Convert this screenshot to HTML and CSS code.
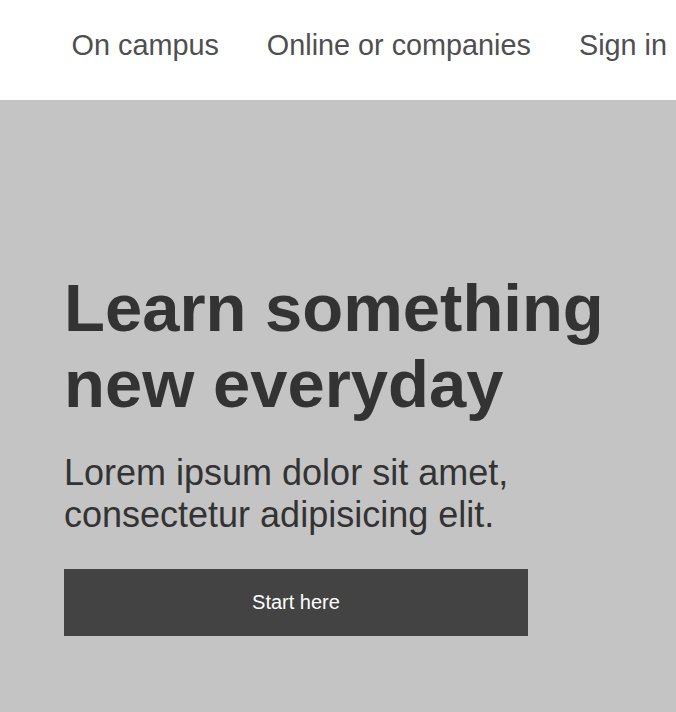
FILE: index.html
```html
<!DOCTYPE html>
<html lang="en">
<head>
<meta charset="utf-8">
<title>Learn something new everyday</title>
<link rel="stylesheet" href="styles.css">
</head>
<body>
<header class="site-header">
  <nav class="nav">
    <a class="nav-link" href="#">On campus</a>
    <a class="nav-link" href="#">Online or companies</a>
    <a class="nav-link" href="#">Sign in</a>
  </nav>
</header>
<main class="hero">
  <div class="hero-content">
    <h1 class="hero-title">Learn something new everyday</h1>
    <p class="hero-text">Lorem ipsum dolor sit amet, consectetur adipisicing elit.</p>
    <a class="hero-button" href="#">Start here</a>
  </div>
</main>
</body>
</html>
```
FILE: styles.css
```css
* {
  box-sizing: border-box;
}

html, body {
  margin: 0;
  padding: 0;
}

body {
  font-family: "Liberation Sans", Arial, sans-serif;
  background: #c4c4c4;
  min-height: 712px;
}

.site-header {
  height: 100px;
  background: #ffffff;
}

.nav {
  display: flex;
  justify-content: flex-end;
  gap: 48px;
  padding: 29px 9px 0 0;
}

.nav-link {
  font-size: 28.8px;
  color: #4f4f4f;
  text-decoration: none;
  white-space: nowrap;
}

.hero {
  background: #c4c4c4;
  padding: 170px 0 80px 64px;
}

.hero-content {
  width: 560px;
}

.hero-title {
  margin: 0;
  font-size: 67px;
  line-height: 76px;
  font-weight: bold;
  color: #333333;
}

.hero-text {
  margin: 30px 0 0;
  font-size: 36px;
  color: #333333;
  width: 470px;
}

.hero-button {
  display: flex;
  align-items: center;
  justify-content: center;
  margin-top: 33px;
  width: 464px;
  height: 67px;
  background: #434343;
  color: #ffffff;
  font-size: 20px;
  text-decoration: none;
}
```
